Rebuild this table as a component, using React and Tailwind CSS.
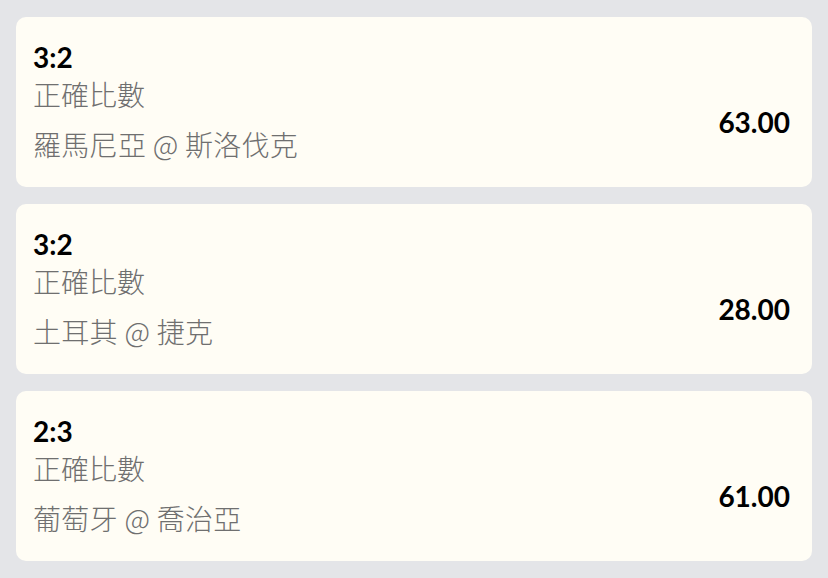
import React from 'react';

const bets = [
  { score: '3:2', market: '正確比數', match: '羅馬尼亞 @ 斯洛伐克', odds: '63.00' },
  { score: '3:2', market: '正確比數', match: '土耳其 @ 捷克', odds: '28.00' },
  { score: '2:3', market: '正確比數', match: '葡萄牙 @ 喬治亞', odds: '61.00' },
];

export default function App() {
  return (
    <div className="min-h-[578px] bg-[#e4e5e8] px-4 py-[17px] flex flex-col gap-[17px]">
      {bets.map((bet, i) => (
        <div key={i} className="h-[170px] bg-[#fffdf5] rounded-[10px] flex items-center pl-[17px] pr-[22px]">
          <div className="flex-1 flex flex-col">
            <div className="font-[Lato,'Noto_Sans_CJK_TC',sans-serif] text-[28px] font-bold text-black leading-[34px]">
              {bet.score}
            </div>
            <div className="font-['Noto_Sans_CJK_TC',Lato,sans-serif] text-[28px] font-light text-[#6f6f6f] leading-[40px]">
              {bet.market}
            </div>
            <div className="font-['Noto_Sans_CJK_TC',Lato,sans-serif] text-[28px] font-light text-[#6f6f6f] leading-[40px] mt-[10px] tracking-[0.3px]">
              {bet.match}
            </div>
          </div>
          <div className="font-[Lato,sans-serif] text-[28px] font-bold text-black mt-[40px]">
            {bet.odds}
          </div>
        </div>
      ))}
    </div>
  );
}
